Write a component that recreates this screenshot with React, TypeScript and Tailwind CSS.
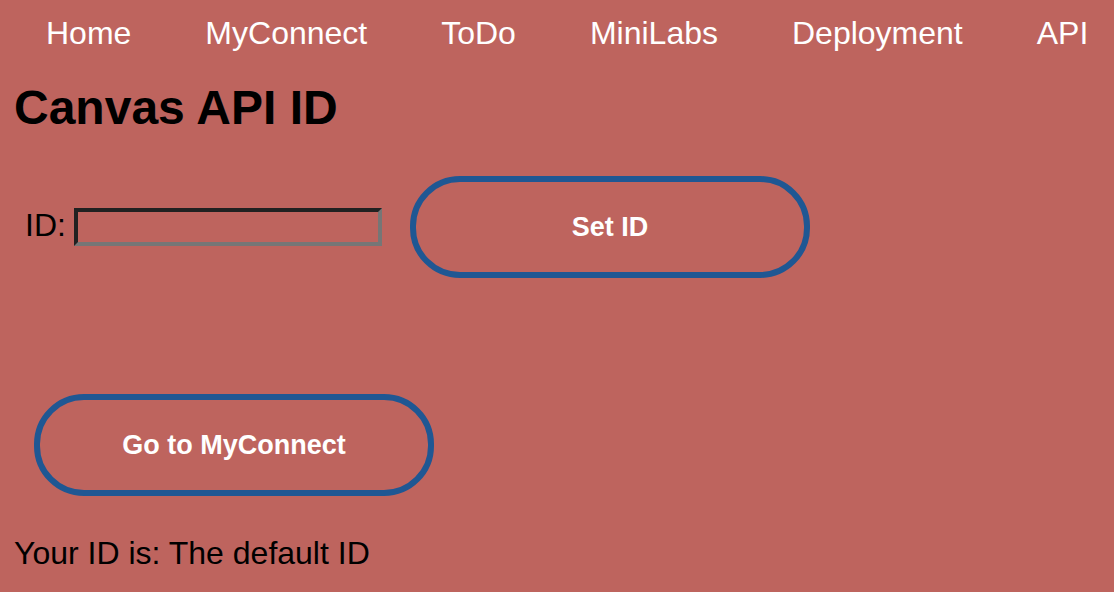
const links = ['Home', 'MyConnect', 'ToDo', 'MiniLabs', 'Deployment', 'API'];

const pill =
  'h-[102px] w-[400px] rounded-[50px] border-6 border-[#1f5793] text-[27px] leading-8 font-bold text-white';

export default function App() {
  return (
    <div className="min-h-screen overflow-x-hidden bg-[#be645e] px-[14px] pt-[15px] font-['Liberation_Sans',Arial,sans-serif] text-[32px] leading-9 text-black">
      <nav className="flex gap-[74px] pl-8 text-white">
        {links.map((label) => (
          <a key={label} href="#" className="whitespace-nowrap">
            {label}
          </a>
        ))}
      </nav>
      <main>
        <h1 className="mt-[29px] text-[48px] leading-14 font-bold">Canvas API ID</h1>
        <form className="mt-10 flex items-center pl-[11px]" onSubmit={(e) => e.preventDefault()}>
          <label htmlFor="canvas-id" className="pb-1">
            ID:
          </label>
          <input
            id="canvas-id"
            type="text"
            className="ml-2 h-[38px] w-[308px] border-4 border-t-[#212121] border-r-[#767676] border-b-[#767676] border-l-[#212121] px-1 text-[27px]"
          />
          <button type="submit" className={`ml-7 ${pill}`}>
            Set ID
          </button>
        </form>
        <button type="button" className={`mt-[116px] ml-5 block ${pill}`}>
          Go to MyConnect
        </button>
        <p className="mt-[39px]">Your ID is: The default ID</p>
      </main>
    </div>
  );
}
